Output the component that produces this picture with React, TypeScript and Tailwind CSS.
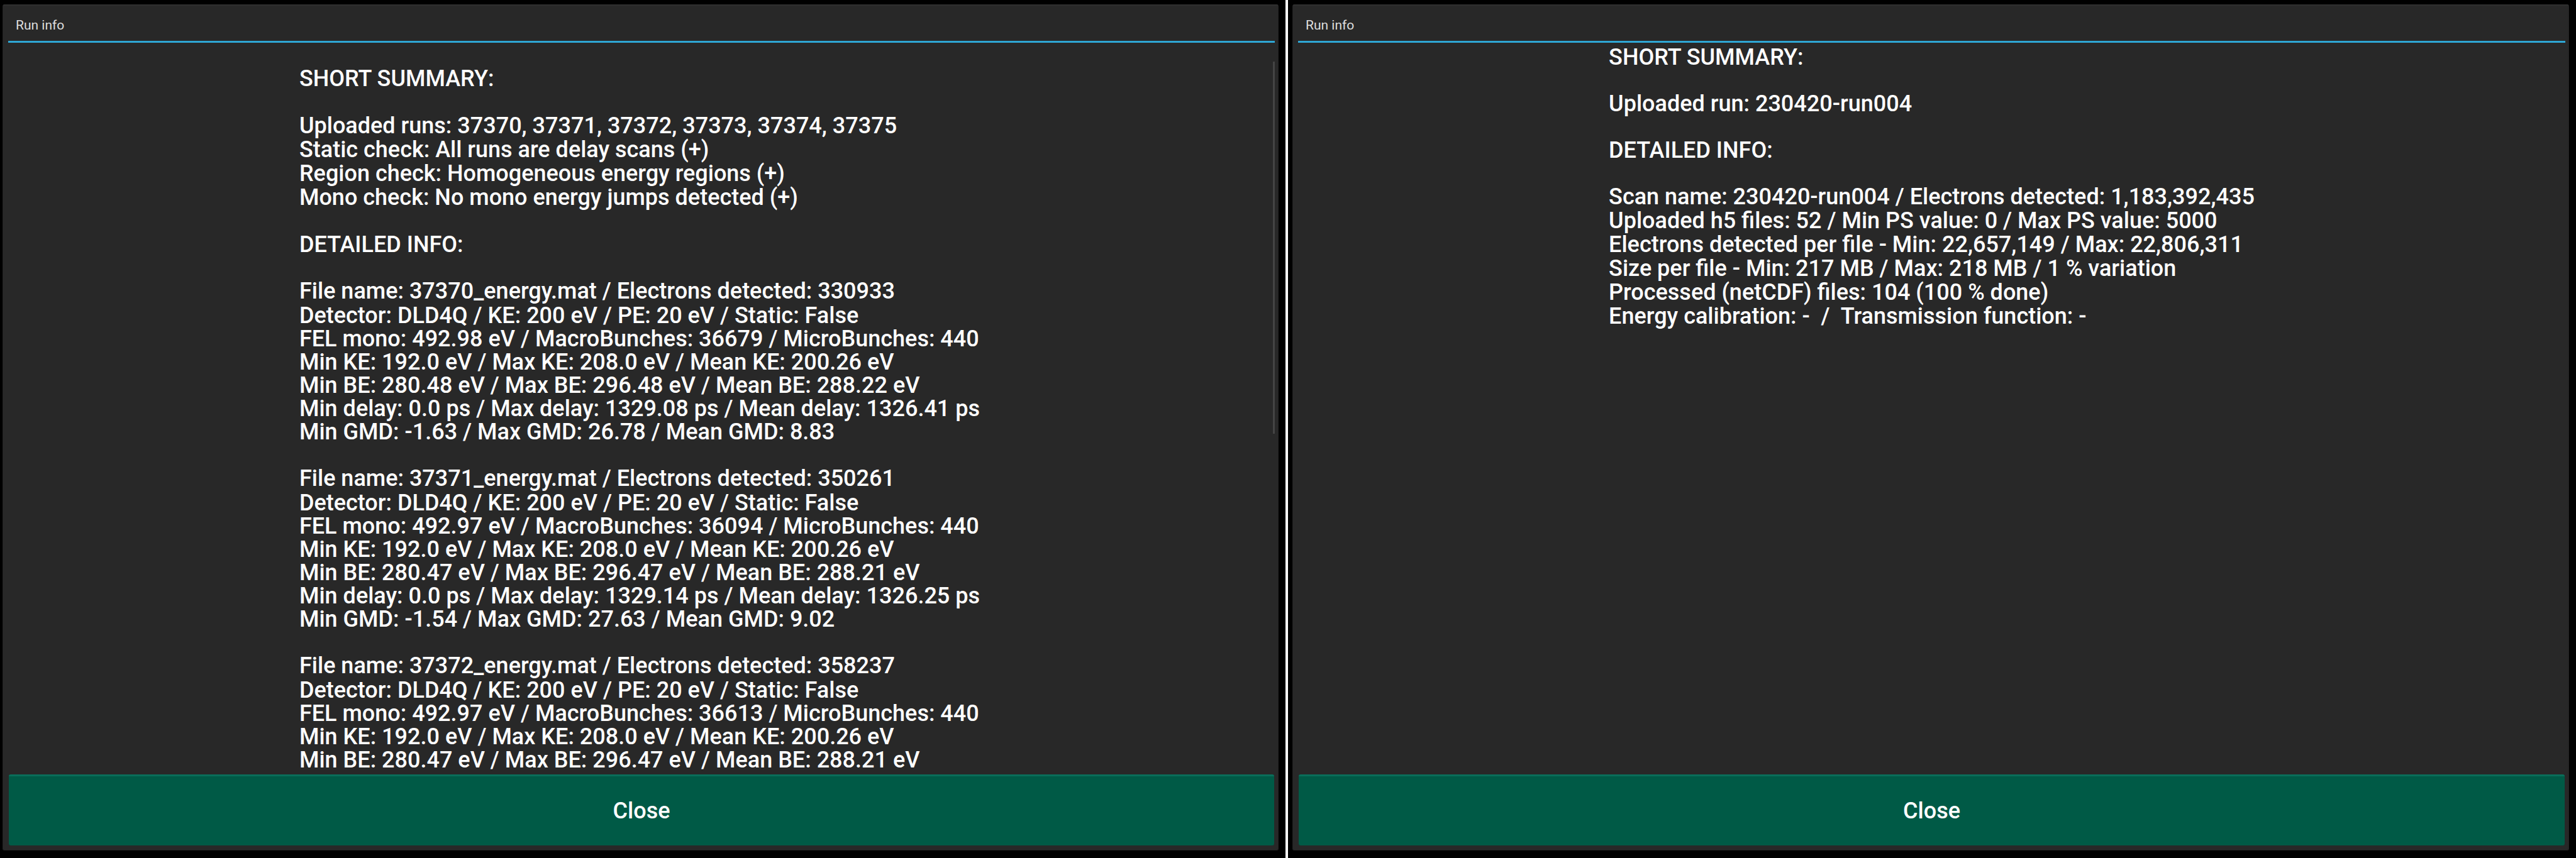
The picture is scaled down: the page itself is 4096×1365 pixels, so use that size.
import type { ReactNode } from 'react';

type Section = string[];

const summaryRuns: Section[] = [
  ['SHORT SUMMARY:'],
  [
    'Uploaded runs: 37370, 37371, 37372, 37373, 37374, 37375',
    'Static check: All runs are delay scans (+)',
    'Region check: Homogeneous energy regions (+)',
    'Mono check: No mono energy jumps detected (+)',
  ],
  ['DETAILED INFO:'],
];

const runFiles: Section[] = [
  [
    'File name: 37370_energy.mat / Electrons detected: 330933',
    'Detector: DLD4Q / KE: 200 eV / PE: 20 eV / Static: False',
    'FEL mono: 492.98 eV / MacroBunches: 36679 / MicroBunches: 440',
    'Min KE: 192.0 eV / Max KE: 208.0 eV / Mean KE: 200.26 eV',
    'Min BE: 280.48 eV / Max BE: 296.48 eV / Mean BE: 288.22 eV',
    'Min delay: 0.0 ps / Max delay: 1329.08 ps / Mean delay: 1326.41 ps',
    'Min GMD: -1.63 / Max GMD: 26.78 / Mean GMD: 8.83',
  ],
  [
    'File name: 37371_energy.mat / Electrons detected: 350261',
    'Detector: DLD4Q / KE: 200 eV / PE: 20 eV / Static: False',
    'FEL mono: 492.97 eV / MacroBunches: 36094 / MicroBunches: 440',
    'Min KE: 192.0 eV / Max KE: 208.0 eV / Mean KE: 200.26 eV',
    'Min BE: 280.47 eV / Max BE: 296.47 eV / Mean BE: 288.21 eV',
    'Min delay: 0.0 ps / Max delay: 1329.14 ps / Mean delay: 1326.25 ps',
    'Min GMD: -1.54 / Max GMD: 27.63 / Mean GMD: 9.02',
  ],
  [
    'File name: 37372_energy.mat / Electrons detected: 358237',
    'Detector: DLD4Q / KE: 200 eV / PE: 20 eV / Static: False',
    'FEL mono: 492.97 eV / MacroBunches: 36613 / MicroBunches: 440',
    'Min KE: 192.0 eV / Max KE: 208.0 eV / Mean KE: 200.26 eV',
    'Min BE: 280.47 eV / Max BE: 296.47 eV / Mean BE: 288.21 eV',
  ],
];

const scanSections: Section[] = [
  ['SHORT SUMMARY:'],
  ['Uploaded run: 230420-run004'],
  ['DETAILED INFO:'],
  [
    'Scan name: 230420-run004 / Electrons detected: 1,183,392,435',
    'Uploaded h5 files: 52 / Min PS value: 0 / Max PS value: 5000',
    'Electrons detected per file - Min: 22,657,149 / Max: 22,806,311',
    'Size per file - Min: 217 MB / Max: 218 MB / 1 % variation',
    'Processed (netCDF) files: 104 (100 % done)',
    'Energy calibration: -  /  Transmission function: -',
  ],
];

function Lines({ lines, className }: { lines: Section; className?: string }) {
  return (
    <div className={className}>
      {lines.map((line) => (
        <p key={line}>{line}</p>
      ))}
    </div>
  );
}

function Dialog({ children }: { children: ReactNode }) {
  return (
    <section className="flex min-h-0 flex-1 flex-col rounded-[3px] border border-t-2 border-[#222222] border-t-[#303030] bg-[#282828] pr-[5px] pb-[7px] pl-2">
      <h2 className="flex h-[59px] shrink-0 items-center border-b-[3px] border-[#2fa7d4] px-3 pt-1.5 text-[21px] leading-[26px] text-[#dedede]">
        Run info
      </h2>
      <div className="relative min-h-0 flex-1 overflow-hidden">{children}</div>
      <button
        type="button"
        className="mx-px h-[113px] shrink-0 rounded-[3px] border-t-[3px] border-[#0a6e5a] bg-[#005a46] text-[36px] font-medium"
      >
        Close
      </button>
    </section>
  );
}

export default function App() {
  return (
    <div className="grid h-screen grid-cols-2 bg-black font-['Roboto',sans-serif] text-white">
      <div className="flex min-h-0 flex-col border-r-4 border-white pt-[7px] pr-[11px] pb-3 pl-1">
        <Dialog>
          <div className="mx-auto flex w-fit flex-col gap-[37px] pt-[38px] pr-1.5 text-[36px] leading-[38px] font-medium whitespace-pre">
            {summaryRuns.map((lines) => (
              <Lines key={lines[0]} lines={lines} />
            ))}
            {runFiles.map((lines) => (
              <Lines
                key={lines[0]}
                lines={lines}
                className="leading-[37px] [&>p:first-child]:pb-0.5"
              />
            ))}
          </div>
          <div className="absolute top-[30px] right-0 h-[592px] w-[3px] bg-[#444444]" />
        </Dialog>
      </div>
      <div className="flex min-h-0 flex-col pt-[7px] pr-[11px] pb-3 pl-[7px]">
        <Dialog>
          <div className="mx-auto flex w-fit flex-col gap-9 pt-1 text-[36px] leading-[38px] font-medium whitespace-pre">
            {scanSections.map((lines) => (
              <Lines key={lines[0]} lines={lines} />
            ))}
          </div>
        </Dialog>
      </div>
    </div>
  );
}
